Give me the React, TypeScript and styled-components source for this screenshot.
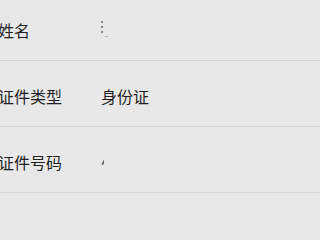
import styled, { createGlobalStyle } from "styled-components";

const GlobalStyle = createGlobalStyle`
  html, body {
    margin: 0;
    padding: 0;
    background: #e8e8e8;
    overflow: hidden;
  }
  body {
    font-family: "Noto Sans CJK SC", "Noto Sans", sans-serif;
  }
`;

const InfoList = styled.ul`
  list-style: none;
  margin: -5px 0 0 -2px;
  padding: 0;
  width: calc(100vw + 2px);
`;

const InfoRow = styled.li`
  display: flex;
  align-items: center;
  height: 66px;
  padding-top: 5px;
  box-sizing: border-box;
  border-bottom: 1px solid #d4d4d4;
`;

const Label = styled.span`
  width: 103px;
  flex-shrink: 0;
  font-size: 16px;
  color: #1f1f1f;
`;

const Value = styled.span`
  font-size: 16px;
  color: #1f1f1f;
  display: flex;
  align-items: center;
`;

const MaskedName = () => (
  <svg width="10" height="18" viewBox="0 0 10 18">
    <rect x="0" y="0" width="2" height="2" fill="#8a8a8a" />
    <rect x="0" y="5" width="2" height="2" fill="#8a8a8a" />
    <rect x="0" y="10" width="2" height="2" fill="#8a8a8a" />
    <rect x="4" y="15" width="3" height="1" fill="#b0b0b0" />
  </svg>
);

const MaskedNumber = () => (
  <svg width="6" height="8" viewBox="0 0 6 8">
    <path d="M0.5 6.5 L2.5 6.5 L3 1.5 Z" fill="#333" />
  </svg>
);

type Row = { label: string; value: React.ReactNode };

const rows: Row[] = [
  { label: "姓名", value: <MaskedName /> },
  { label: "证件类型", value: "身份证" },
  { label: "证件号码", value: <MaskedNumber /> },
];

export default function App() {
  return (
    <>
      <GlobalStyle />
      <InfoList>
        {rows.map((row) => (
          <InfoRow key={row.label}>
            <Label>{row.label}</Label>
            <Value>{row.value}</Value>
          </InfoRow>
        ))}
      </InfoList>
    </>
  );
}
